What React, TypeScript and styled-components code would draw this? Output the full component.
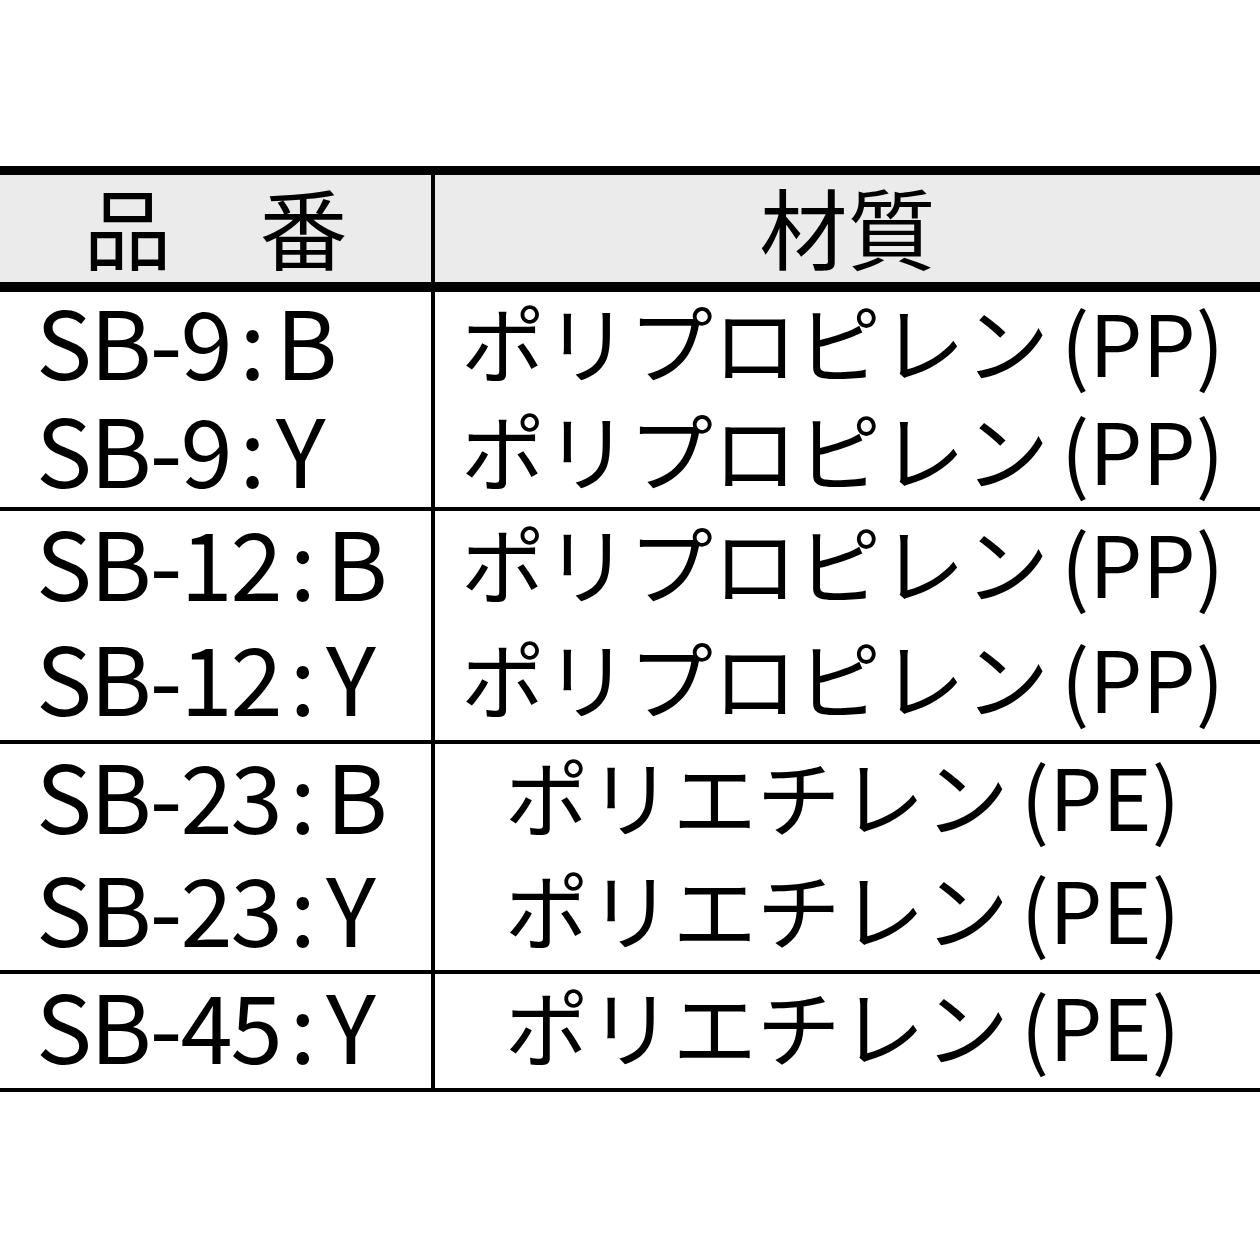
import React from 'react';
import styled, { createGlobalStyle } from 'styled-components';

const GlobalStyle = createGlobalStyle`
  html, body {
    margin: 0;
    padding: 0;
    background: #ffffff;
  }
  body {
    font-family: "Noto Sans CJK JP", "Noto Sans", sans-serif;
    color: #000000;
  }
`;

type Item = { code: string; tail: string; kana: string; abbr: string };
type Group = { rowH: number; rows: Item[] };

const PP = { kana: 'ポリプロピレン', abbr: '(PP)' };
const PE = { kana: 'ポリエチレン', abbr: '(PE)' };

const groups: Group[] = [
  {
    rowH: 107.5,
    rows: [
      { code: 'SB-9', tail: 'B', ...PP },
      { code: 'SB-9', tail: 'Y', ...PP },
    ],
  },
  {
    rowH: 114.5,
    rows: [
      { code: 'SB-12', tail: 'B', ...PP },
      { code: 'SB-12', tail: 'Y', ...PP },
    ],
  },
  {
    rowH: 113,
    rows: [
      { code: 'SB-23', tail: 'B', ...PE },
      { code: 'SB-23', tail: 'Y', ...PE },
    ],
  },
  {
    rowH: 114,
    rows: [{ code: 'SB-45', tail: 'Y', ...PE }],
  },
];

const Page = styled.div`
  width: 1260px;
  height: 1260px;
  padding-top: 166px;
  box-sizing: border-box;
`;

const Table = styled.div`
  width: 100%;
  border-top: 9px solid #000;
`;

const HeaderRow = styled.div`
  display: grid;
  grid-template-columns: 435px 1fr;
  height: 107px;
  background: #ebebeb;
  border-bottom: 10px solid #000;
`;

const HeaderCell = styled.div<{ $divider?: boolean }>`
  display: flex;
  align-items: center;
  justify-content: center;
  font-size: 88px;
  line-height: 1;
  box-sizing: border-box;
  border-right: ${(p) => (p.$divider ? '4px solid #000' : 'none')};
  padding-bottom: 8px;
`;

const GroupBox = styled.div`
  border-bottom: 4px solid #000;
`;

const Row = styled.div<{ $h: number }>`
  display: grid;
  grid-template-columns: 435px 1fr;
  height: ${(p) => p.$h}px;
`;

const CodeCell = styled.div`
  display: flex;
  align-items: center;
  box-sizing: border-box;
  border-right: 4px solid #000;
  padding-left: 36px;
  padding-bottom: 16px;
  font-size: 94px;
  letter-spacing: -2px;
  line-height: 1;
  white-space: nowrap;
`;

const Colon = styled.span`
  margin: 0 12px 0 9px;
`;

const MaterialCell = styled.div`
  display: flex;
  align-items: center;
  justify-content: center;
  font-size: 84px;
  line-height: 1;
  white-space: nowrap;
  padding-right: 10px;
  padding-bottom: 12px;
`;

const Abbr = styled.span`
  margin-left: 12px;
`;

export default function App() {
  return (
    <Page>
      <GlobalStyle />
      <Table>
        <HeaderRow>
          <HeaderCell $divider>品　番</HeaderCell>
          <HeaderCell>材質</HeaderCell>
        </HeaderRow>
        {groups.map((g, gi) => (
          <GroupBox key={gi}>
            {g.rows.map((r, ri) => (
              <Row key={ri} $h={g.rowH}>
                <CodeCell>
                  {r.code}
                  <Colon>:</Colon>
                  {r.tail}
                </CodeCell>
                <MaterialCell>
                  {r.kana}
                  <Abbr>{r.abbr}</Abbr>
                </MaterialCell>
              </Row>
            ))}
          </GroupBox>
        ))}
      </Table>
    </Page>
  );
}
